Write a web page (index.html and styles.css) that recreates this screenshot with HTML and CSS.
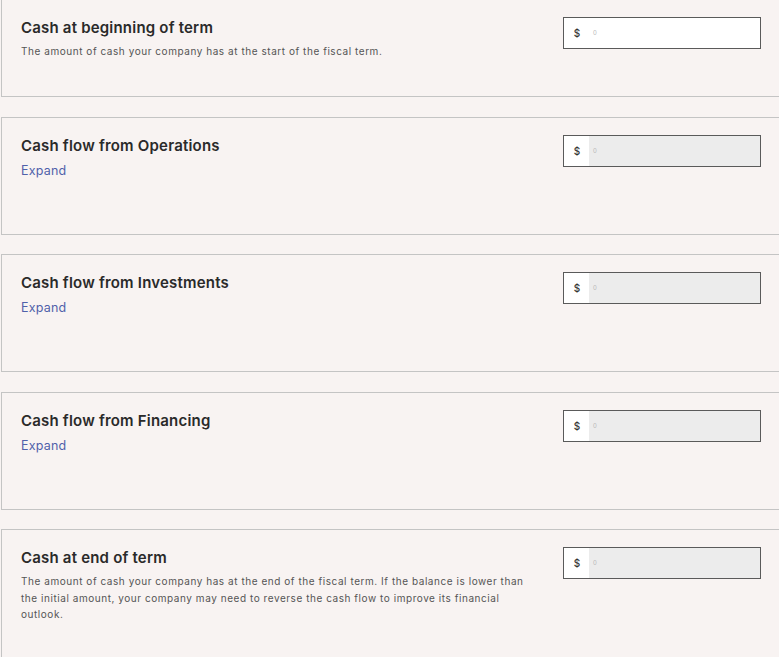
FILE: index.html
```html
<!DOCTYPE html>
<html lang="en">
<head>
<meta charset="utf-8">
<title>Cash flow</title>
<link rel="stylesheet" href="styles.css">
</head>
<body>
<div class="list">
  <section class="card card-first">
    <div class="info">
      <h2 class="title">Cash at beginning of term</h2>
      <p class="desc">The amount of cash your company has at the start of the fiscal term.</p>
    </div>
    <div class="field field-editable">
      <span class="prefix">$</span>
      <span class="value">0</span>
    </div>
  </section>
  <section class="card">
    <div class="info">
      <h2 class="title">Cash flow from Operations</h2>
      <a class="expand" href="#">Expand</a>
    </div>
    <div class="field">
      <span class="prefix">$</span>
      <span class="value">0</span>
    </div>
  </section>
  <section class="card">
    <div class="info">
      <h2 class="title">Cash flow from Investments</h2>
      <a class="expand" href="#">Expand</a>
    </div>
    <div class="field">
      <span class="prefix">$</span>
      <span class="value">0</span>
    </div>
  </section>
  <section class="card">
    <div class="info">
      <h2 class="title">Cash flow from Financing</h2>
      <a class="expand" href="#">Expand</a>
    </div>
    <div class="field">
      <span class="prefix">$</span>
      <span class="value">0</span>
    </div>
  </section>
  <section class="card card-last">
    <div class="info">
      <h2 class="title">Cash at end of term</h2>
      <p class="desc desc-wide">The amount of cash your company has at the end of the fiscal term. If the balance is lower than the initial amount, your company may need to reverse the cash flow to improve its financial outlook.</p>
    </div>
    <div class="field">
      <span class="prefix">$</span>
      <span class="value">0</span>
    </div>
  </section>
</div>
</body>
</html>
```

FILE: styles.css
```css
html, body {
  margin: 0;
  padding: 0;
  background: #f8f3f2;
  overflow: hidden;
}

body {
  font-family: Inter, "Open Sans", "Liberation Sans", sans-serif;
  color: #2b2b2b;
}

.list {
  display: flex;
  flex-direction: column;
  gap: 19.5px;
  padding-left: 1px;
}

.card {
  box-sizing: border-box;
  display: flex;
  align-items: flex-start;
  height: 118px;
  padding: 17px 18px 0 19px;
  border: 1px solid #c4c4c4;
  border-right: none;
  background: #f8f3f2;
}

.card .info {
  padding-top: 1px;
}

.card-first {
  border-top: none;
  height: 97px;
}

.card-last {
  height: 140px;
}

.info {
  flex: 1;
  min-width: 0;
}

.title {
  margin: 0;
  font-size: 15px;
  line-height: 20px;
  font-weight: 600;
  color: #2a2a2a;
  letter-spacing: 0.2px;
}

.desc {
  margin: 5px 0 0;
  font-size: 10px;
  line-height: 16.6px;
  color: #555;
  letter-spacing: 0.55px;
}

.desc-wide {
  max-width: 506px;
}

.expand {
  display: block;
  margin-top: 6px;
  font-size: 12.5px;
  line-height: 18px;
  color: #5061aa;
  letter-spacing: 0.2px;
  text-decoration: none;
}

.field {
  box-sizing: border-box;
  display: flex;
  width: 198px;
  height: 32px;
  border: 1px solid #5a5a5a;
  background: #ececec;
}

.field-editable {
  background: #ffffff;
}

.prefix {
  width: 24px;
  background: #ffffff;
  font-size: 10px;
  font-weight: 500;
  line-height: 30px;
  text-align: center;
  color: #333;
  padding-left: 1px;
}

.value {
  padding-left: 4px;
  font-size: 6px;
  line-height: 30px;
  color: #b8b8b8;
}
```
